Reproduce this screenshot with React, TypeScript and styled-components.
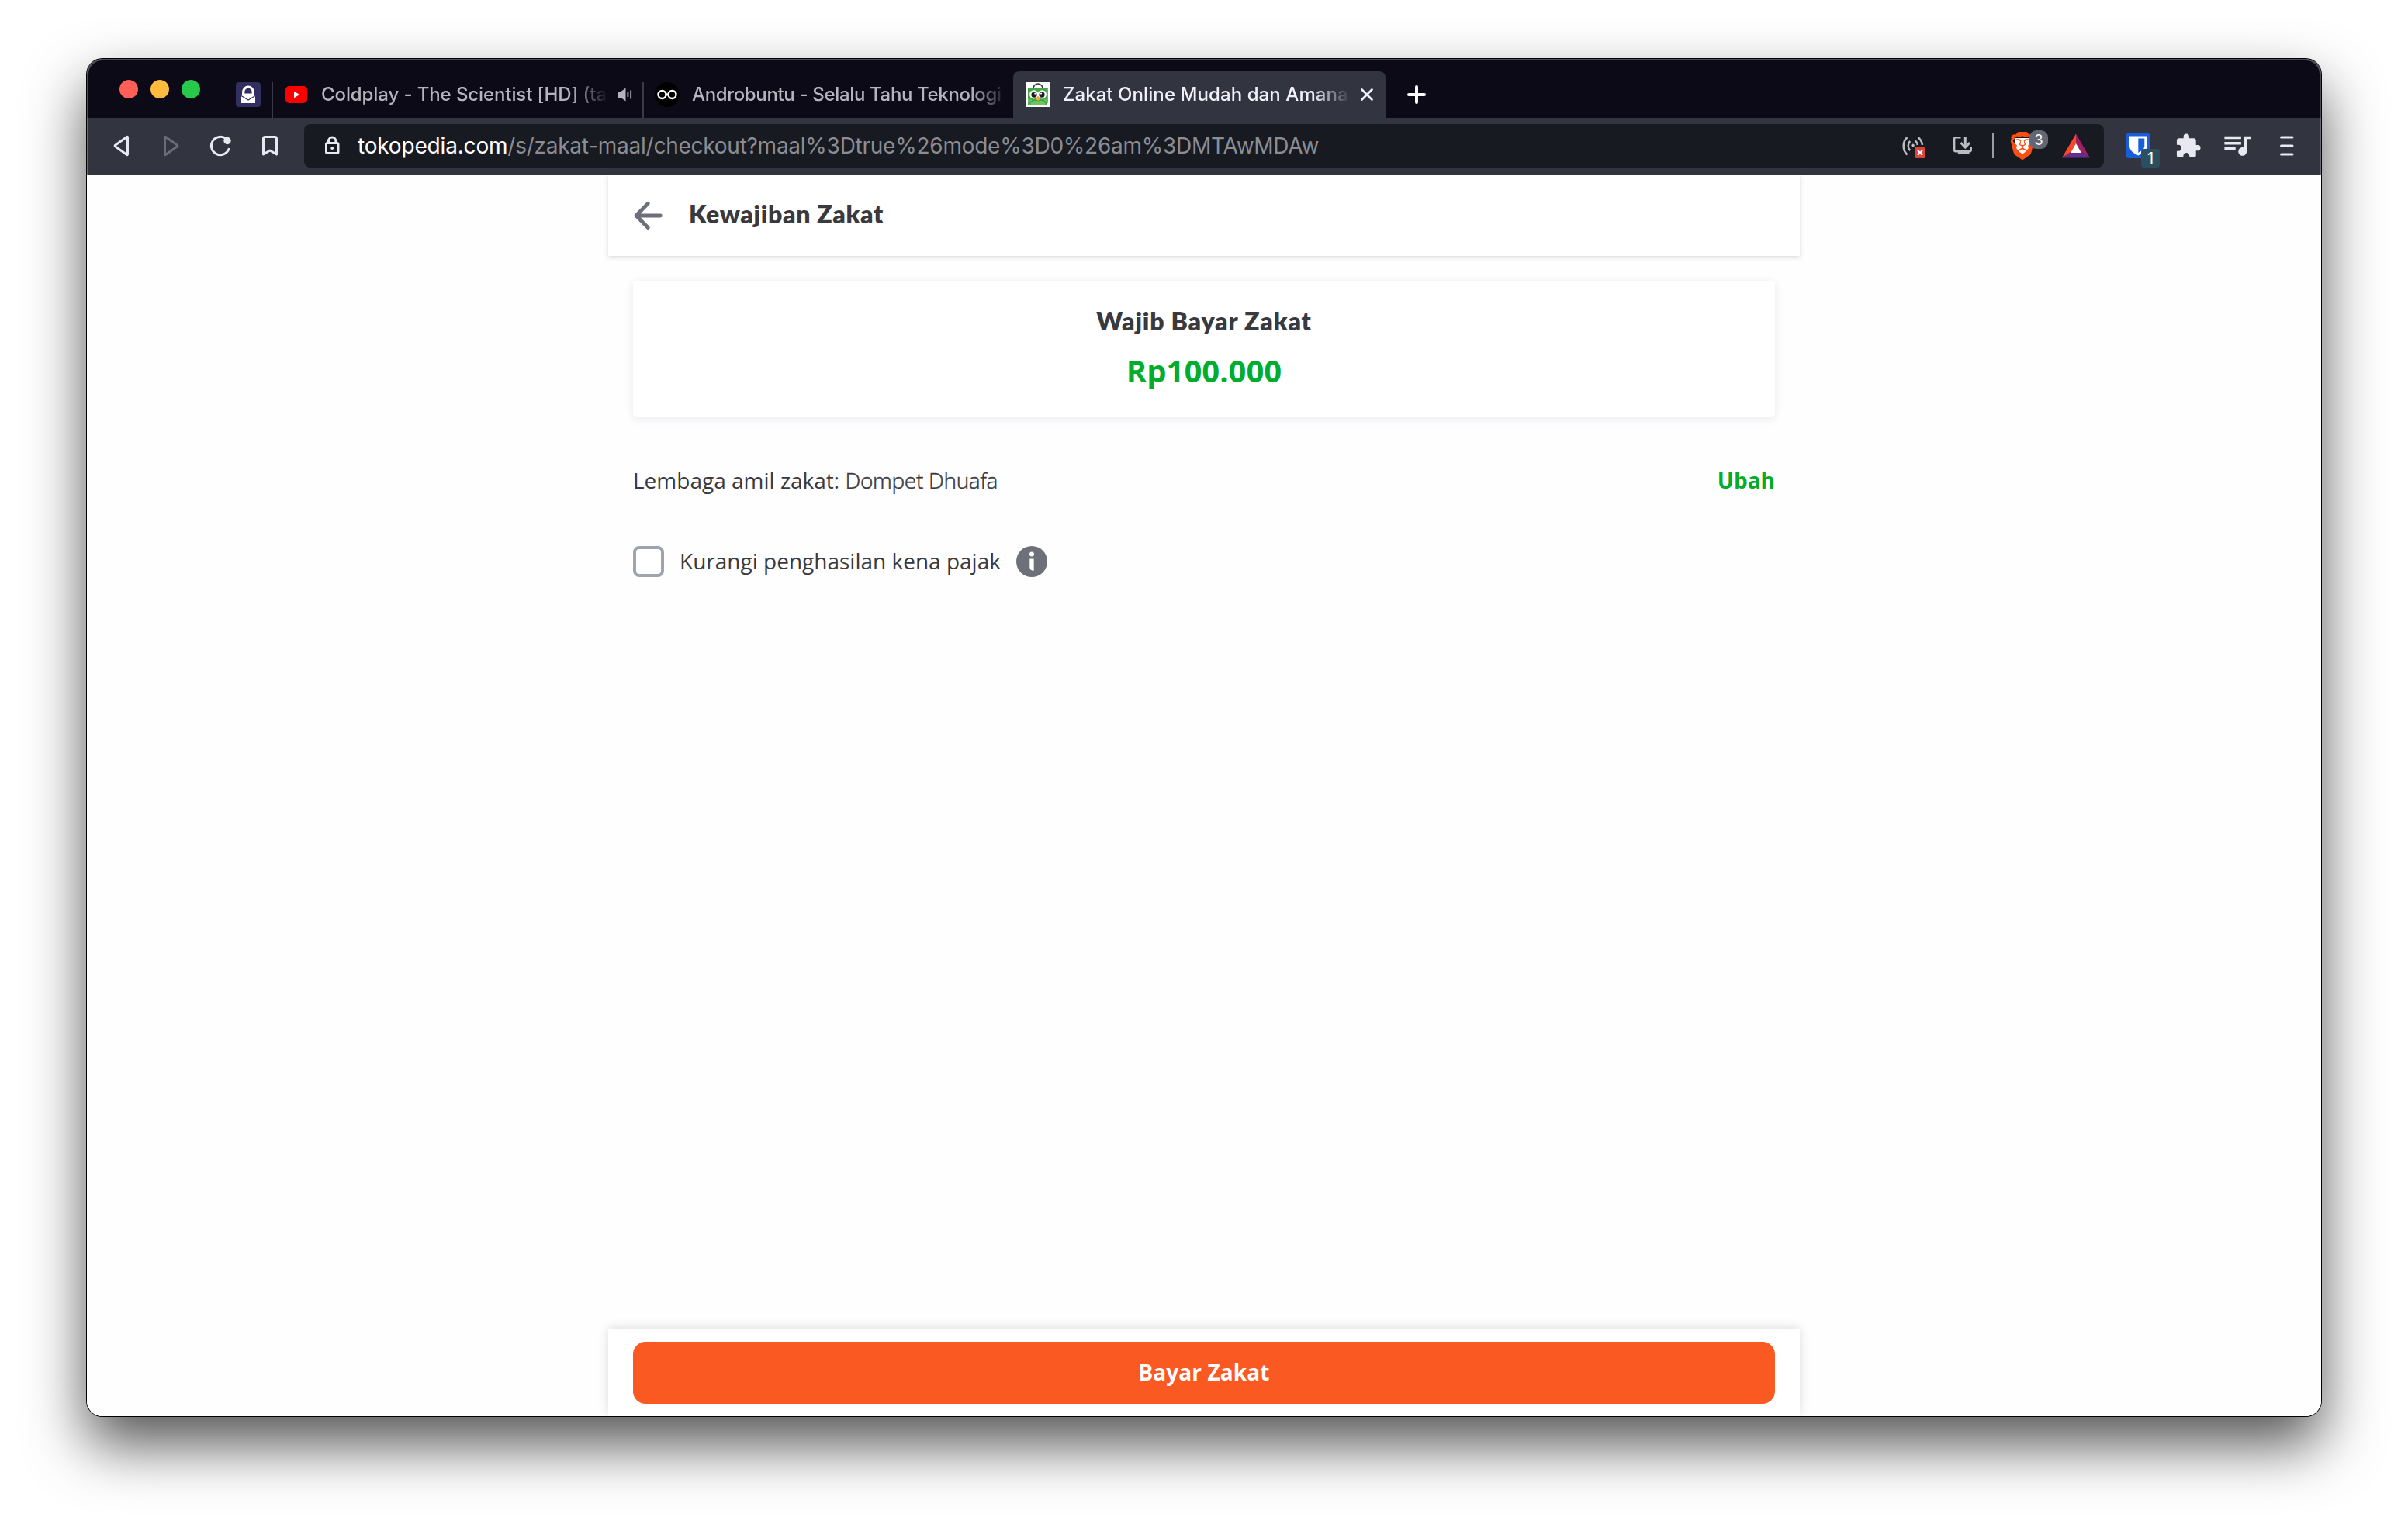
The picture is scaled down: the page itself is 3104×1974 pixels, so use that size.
import React from "react";

import styled, { createGlobalStyle, css } from "styled-components";
import { MdExtension, MdQueueMusic } from "react-icons/md";
import { SiBrave } from "react-icons/si";

const Color = {
    WHITE: "#ffffff",
    TAB_STRIP: "#0c0a17",
    TOOLBAR: "#323440",
    ADDRESS: "#171a21",
    ICON: "#e8e8f2",
    ICON_DISABLED: "#6b6c78",
    ICON_ADDRESS: "#bcbdc0",
    TAB_TEXT: "#b6b3bf",
    TAB_TEXT_ACTIVE: "#f1f0fa",
    URL_PATH: "#8b8d93",
    DARK: "#3a3a3e",
    GREY: "#6d7078",
    GREEN: "#03ac2b",
    ORANGE: "#fb5922",
}

const FontFamily = {
    UI: `Inter, "Liberation Sans", sans-serif`,
    BODY: `"Open Sans", "Noto Sans", sans-serif`,
    TITLE: `Lato, "Open Sans", sans-serif`,
}

const URL_HOST = "tokopedia.com"
const URL_PATH = "/s/zakat-maal/checkout?maal%3Dtrue%26mode%3D0%26am%3DMTAwMDAw"

export default function App() {
    return <Desktop>
        <GlobalStyle />
        <Window>
            <TabStrip />
            <Toolbar />
            <CheckoutPage />
        </Window>
    </Desktop>
}

function TabStrip() {
    return <StyledTabStrip>
        <TrafficLights>
            <TrafficLight color="#ff5f57" />
            <TrafficLight color="#febb3e" />
            <TrafficLight color="#28c84b" />
        </TrafficLights>
        <PinnedTab><ProtonMailIcon /></PinnedTab>
        <TabSeparator />
        <Tab>
            <YouTubeIcon />
            <TabTitle width={371} spacing={-0.1}>Coldplay - The Scientist [HD] (ta</TabTitle>
            <SpeakerIcon />
        </Tab>
        <TabSeparator />
        <Tab>
            <InfinityIcon />
            <TabTitle width={408} spacing={-0.347}>Androbuntu - Selalu Tahu Teknologi</TabTitle>
        </Tab>
        <Tab active>
            <TokopediaIcon />
            <TabTitle width={371} spacing={0.081}>Zakat Online Mudah dan Amana</TabTitle>
            <CloseIcon />
        </Tab>
        <NewTabButton>
            <svg width="24" height="24" viewBox="0 0 24 24">
                <path d="M12 2v20M2 12h20" stroke={Color.WHITE} strokeWidth="4" strokeLinecap="round" />
            </svg>
        </NewTabButton>
    </StyledTabStrip>
}

function Toolbar() {
    return <StyledToolbar>
        <NavigationButtons>
            <BackIcon />
            <ForwardIcon />
            <ReloadIcon />
            <BookmarkIcon />
        </NavigationButtons>
        <AddressBar>
            <LockIcon />
            <UrlText><b>{URL_HOST}</b>{URL_PATH}</UrlText>
            <AddressActions>
                <BadgeAnchor>
                    <CastIcon />
                    <BlockedBadge>
                        <svg width="8" height="8" viewBox="0 0 8 8">
                            <path d="M1 1l6 6M7 1l-6 6" stroke={Color.WHITE} strokeWidth="2" />
                        </svg>
                    </BlockedBadge>
                </BadgeAnchor>
                <DownloadIcon />
                <AddressDivider />
                <BadgeAnchor>
                    <BraveIcon />
                    <ShieldsBadge>3</ShieldsBadge>
                </BadgeAnchor>
                <BatIcon />
            </AddressActions>
        </AddressBar>
        <ExtensionButtons>
            <BadgeAnchor>
                <BitwardenIcon />
                <BitwardenBadge>1</BitwardenBadge>
            </BadgeAnchor>
            <MdExtension size={35} color={Color.ICON} />
            <PlaylistIcon size={43} color={Color.ICON} />
            <MenuIcon />
        </ExtensionButtons>
    </StyledToolbar>
}

function CheckoutPage() {
    return <Viewport>
        <PageColumn>
            <PageHeader>
                <ArrowLeftIcon />
                <PageTitle>Kewajiban Zakat</PageTitle>
            </PageHeader>
            <PageBody>
                <AmountCard>
                    <CardTitle>Wajib Bayar Zakat</CardTitle>
                    <Amount>Rp100.000</Amount>
                </AmountCard>
                <InstitutionRow>
                    <BodyText>Lembaga amil zakat: <LightText>Dompet Dhuafa</LightText></BodyText>
                    <ChangeLink>Ubah</ChangeLink>
                </InstitutionRow>
                <TaxRow>
                    <Checkbox />
                    <BodyText>Kurangi penghasilan kena pajak</BodyText>
                    <InfoIcon />
                </TaxRow>
            </PageBody>
            <PageFooter>
                <PayButton>Bayar Zakat</PayButton>
            </PageFooter>
        </PageColumn>
    </Viewport>
}

/* Tab icons */

const ProtonMailIcon = () => <svg width="32" height="32" viewBox="0 0 32 32">
    <rect width="32" height="32" rx="4" fill="#312f60" />
    <path d="M8 13a8 8.500 0 0 1 16 0v4h1v10H7V17h1z" fill={Color.WHITE} />
    <path d="M11.300 14.500v-1.800a4.700 5 0 0 1 9.400 0v1.800z" fill="#312f60" />
    <path d="M7 17.600l9 5.400 9-5.400" fill="none" stroke="#312f60" strokeWidth="1.200" />
</svg>

const YouTubeIcon = () => <svg width="32" height="32" viewBox="0 0 32 32">
    <rect x="2" y="5" width="28" height="22" rx="5" fill="#ff0000" />
    <path d="M13 11.800v8.400l7.200-4.200z" fill={Color.WHITE} />
</svg>

const SpeakerIcon = () => <svg width="20" height="20" viewBox="0 0 20 20" fill={Color.TAB_TEXT}>
    <path d="M0 6h4.500l6-4.500v17l-6-4.500H0z" />
    <rect x="12.500" y="7" width="1.800" height="6" />
    <rect x="16.300" y="4.500" width="1.800" height="11" />
</svg>

const InfinityIcon = () => <svg width="32" height="32" viewBox="0 0 32 32" fill="none">
    <circle cx="16" cy="16" r="16" fill="#000" />
    <circle cx="9.500" cy="16" r="5" stroke={Color.WHITE} strokeWidth="2.400" />
    <circle cx="22.500" cy="16" r="5" stroke={Color.WHITE} strokeWidth="2.400" />
    <path d="M13.800 14.500l4.400 3M13.800 17.500l4.400-3" stroke={Color.WHITE} strokeWidth="1.600" />
</svg>

const TokopediaIcon = () => <svg width="32" height="32" viewBox="0 0 32 32">
    <rect width="32" height="32" fill={Color.WHITE} />
    <path d="M10 8a6 6 0 0 1 12 0" fill="none" stroke="#2f3b33" strokeWidth="1.700" />
    <path d="M3 7h25.800v17.500a5.500 5.500 0 0 1-5.500 5.500H3z" fill="#43a648" />
    <path d="M3 21l6 1.500L3.500 29z" fill="#63be5b" />
    <path d="M28.800 21l-6 1.500 5.500 5z" fill="#63be5b" />
    <path d="M5 29.500c3-5 6-6.500 11-5 5-1.500 8 0 10 4l-3 1z" fill="#6cc662" />
    <circle cx="10.700" cy="15.800" r="5.600" fill={Color.WHITE} />
    <circle cx="21.300" cy="15.800" r="5.600" fill={Color.WHITE} />
    <circle cx="11" cy="16.200" r="3.600" fill="#1d1d1d" />
    <circle cx="21" cy="16.200" r="3.600" fill="#1d1d1d" />
    <circle cx="12.300" cy="14.600" r="1.100" fill={Color.WHITE} />
    <circle cx="20" cy="14.600" r="1.100" fill={Color.WHITE} />
    <path d="M16 18.500c2 1 3.200 2 2.800 3.200l-2.800 2.300-2.800-2.300c-.4-1.200.8-2.200 2.800-3.200z" fill="#f9a825" />
</svg>

const CloseIcon = () => <svg width="20" height="20" viewBox="0 0 20 20">
    <path d="M3.500 3.500l13 13M16.500 3.500l-13 13" stroke={Color.TAB_TEXT_ACTIVE} strokeWidth="2.800" strokeLinecap="round" />
</svg>

/* Toolbar icons */

const strokeProps = { fill: "none", stroke: Color.ICON, strokeWidth: 3, strokeLinejoin: "round", strokeLinecap: "round" } as const

const BackIcon = () => <svg width="32" height="32" viewBox="0 0 32 32">
    <path d="M23.500 5v22a.6.6 0 0 1-1 .5L7.500 16.800a1 1 0 0 1 0-1.600L22.500 4.500a.6.6 0 0 1 1 .5z" {...strokeProps} />
</svg>

const ForwardIcon = () => <svg width="32" height="32" viewBox="0 0 32 32">
    <path d="M7.500 5v22a.6.6 0 0 0 1 .5l15-10.700a1 1 0 0 0 0-1.600L8.500 4.500a.6.6 0 0 0-1 .5z" {...strokeProps} stroke={Color.ICON_DISABLED} />
</svg>

const ReloadIcon = () => <svg width="32" height="32" viewBox="0 0 32 32">
    <path d="M26 20.300A11.700 11.700 0 1 1 22.600 7" {...strokeProps} />
    <circle cx="24" cy="9.500" r="4.700" fill={Color.ICON} />
</svg>

const BookmarkIcon = () => <svg width="32" height="32" viewBox="0 0 32 32">
    <path d="M8.500 4.500h13a2 2 0 0 1 2 2V27L15 22l-8.500 5V6.500a2 2 0 0 1 2-2z" {...strokeProps} />
</svg>

const LockIcon = () => <svg width="32" height="32" viewBox="0 0 32 32" fill="none" stroke={Color.ICON} strokeWidth="3">
    <rect x="8.500" y="12.500" width="15.500" height="13" rx="1.500" />
    <path d="M11.500 12V9.800a4.700 4.700 0 0 1 9.400 0V12" />
    <circle cx="16.200" cy="19" r="2" fill={Color.ICON} stroke="none" />
</svg>

const CastIcon = () => <svg width="32" height="32" viewBox="0 0 32 32" fill="none" stroke={Color.ICON_ADDRESS} strokeWidth="2.500">
    <path d="M8.500 5a15.500 15.500 0 0 0 0 22.500" />
    <path d="M12.200 10a8.500 8.500 0 0 0 0 12" />
    <path d="M22.500 5a15.500 15.500 0 0 1 5.500 10" />
    <path d="M18.800 9.500a8.500 8.500 0 0 1 3 5.500" />
    <circle cx="15.600" cy="15.600" r="2.200" fill={Color.ICON_ADDRESS} stroke="none" />
</svg>

const DownloadIcon = () => <svg width="32" height="32" viewBox="0 0 32 32" fill="none" stroke={Color.ICON_ADDRESS} strokeWidth="2.400">
    <path d="M13.500 5.200H6.700a1.500 1.500 0 0 0-1.500 1.500v15a1.500 1.500 0 0 0 1.500 1.500h18.600a1.500 1.500 0 0 0 1.500-1.500V18" />
    <path d="M19.300 4v12" strokeWidth="3" />
    <path d="M13.500 12l5.800 6 5.800-6" strokeWidth="3" />
    <path d="M11.500 23h11.500v2.200H11.500zM9.800 25.800h14.700" />
</svg>

const BraveIcon = () => <svg width="30" height="36" viewBox="0 0 30 36">
    <path d="M5 8h20v13l-6 8h-8l-6-8z" fill={Color.WHITE} />
    <SiBrave x={-3} y={0} size={36} color="#fb4f14" />
</svg>

const BatIcon = () => <svg width="36" height="32" viewBox="0 0 36 32">
    <path d="M18 .500L0 31.500l11.500-7.500L18 13.500z" fill="#ff4724" />
    <path d="M18 .500l18 31L24.500 24 18 13.500z" fill="#9e1f63" />
    <path d="M0 31.500h36L24.500 24h-13z" fill="#662d91" />
    <path d="M18 13l7 12H11z" fill={Color.WHITE} />
</svg>

const BitwardenIcon = () => <svg width="32" height="32" viewBox="0 0 32 32">
    <rect width="32" height="32" rx="4" fill="#175ddc" />
    <path d="M5 3.500h22.500v12.500c0 6-5 9.500-11.200 12.500C10 25.500 5 22 5 16z" fill={Color.WHITE} />
    <path d="M16.300 6.500h8v9.500c0 4-3.500 6.500-8 9z" fill="#175ddc" />
</svg>

const MenuIcon = () => <svg width="32" height="32" viewBox="0 0 32 32">
    <path d="M8.500 5h14.500M8.500 16h14.500M8.500 27h14.500" {...strokeProps} />
</svg>

/* Page icons */

const ArrowLeftIcon = () => <svg width="40" height="40" viewBox="0 0 40 40">
    <path d="M19.300 4.300L4 20l15.300 15.500M4.500 20h30.800" fill="none" stroke={Color.GREY} strokeWidth="4.800" strokeLinecap="round" strokeLinejoin="round" />
</svg>

const InfoIcon = () => <svg width="40" height="40" viewBox="0 0 40 40">
    <circle cx="20" cy="20" r="20" fill={Color.GREY} />
    <circle cx="20" cy="10.500" r="3" fill={Color.WHITE} />
    <path d="M17.300 16.500h5.400v15.300c-3.300 0-5.400-1.300-5.400-4z" fill={Color.WHITE} />
</svg>

const GlobalStyle = createGlobalStyle`
    body {
        margin: 0;
        background: ${Color.WHITE};
    }

    svg {
        display: block;
        flex-shrink: 0;
    }
`

const Desktop = styled.div`
    box-sizing: border-box;
    width: 3104px;
    height: 1974px;
    padding: 76px 112px 148px;
    overflow: hidden;
`

const Window = styled.div`
    position: relative;
    display: flex;
    flex-direction: column;
    height: 1750px;
    border-radius: 20px;
    overflow: hidden;
    background: ${Color.WHITE};
    box-shadow: 0 0 0 1px #000, 0 36px 76px rgba(0, 0, 0, 0.68);

    &::after {
        content: "";
        position: absolute;
        inset: 0;
        border-radius: 20px;
        box-shadow: inset 0 0 0 2px rgba(255, 255, 255, 0.28);
    }
`

const StyledTabStrip = styled.div`
    display: flex;
    align-items: flex-end;
    height: 76px;
    background: ${Color.TAB_STRIP};
`

const TrafficLights = styled.div`
    display: flex;
    gap: 16px;
    align-self: flex-start;
    padding: 27px 30px 0 42px;
`

const TrafficLight = styled.span<{ color: string }>`
    width: 24px;
    height: 24px;
    border-radius: 50%;
    background: ${({ color }) => color};
`

const PinnedTab = styled.div`
    display: flex;
    align-items: center;
    height: 60px;
    padding: 0 14px 0 16px;
`

const TabSeparator = styled.span`
    width: 2px;
    height: 46px;
    background: #3b3946;
`

const Tab = styled.div.withConfig({ shouldForwardProp: (prop) => prop !== "active" })<{ active?: boolean }>`
    display: flex;
    align-items: center;
    gap: 15px;
    box-sizing: border-box;
    width: 476px;
    height: 60px;
    padding-left: 14px;
    color: ${Color.TAB_TEXT};
    ${({ active }) => active && css`
        width: 480px;
        padding-left: 16px;
        border-radius: 8px 8px 0 0;
        background: ${Color.TOOLBAR};
        color: ${Color.TAB_TEXT_ACTIVE};
    `}
`

const TabTitle = styled.span.withConfig({ shouldForwardProp: (prop) => prop !== "width" && prop !== "spacing" })<{ width: number; spacing: number }>`
    flex-shrink: 0;
    width: ${({ width }) => width}px;
    margin: 0 -4px 0 1px;
    white-space: nowrap;
    font-family: ${FontFamily.UI};
    font-size: 24px;
    font-weight: 500;
    line-height: 32px;
    letter-spacing: ${({ spacing }) => spacing}px;
    mask-image: linear-gradient(to right, #000 calc(100% - 48px), transparent);
`

const NewTabButton = styled.div`
    display: flex;
    align-items: center;
    height: 60px;
    padding-left: 28px;
`

const StyledToolbar = styled.div`
    display: flex;
    align-items: center;
    box-sizing: border-box;
    height: 74px;
    padding: 8px 0 10px 29px;
    background: ${Color.TOOLBAR};
`

const NavigationButtons = styled.div`
    display: flex;
    gap: 32px;
    margin-right: 27px;
`

const AddressBar = styled.div`
    display: flex;
    align-items: center;
    box-sizing: border-box;
    width: 2320px;
    height: 56px;
    padding: 0 18px 0 20px;
    border-radius: 8px;
    background: ${Color.ADDRESS};
`

const UrlText = styled.span`
    margin-left: 17px;
    font-family: ${FontFamily.UI};
    font-size: 28px;
    line-height: 36px;
    letter-spacing: -0.25px;
    color: ${Color.URL_PATH};

    b {
        font-weight: 400;
        letter-spacing: -0.18px;
        color: ${Color.WHITE};
    }
`

const AddressActions = styled.div`
    display: flex;
    align-items: center;
    margin-left: auto;

    > :nth-child(2) {
        margin: 0 22px 0 32px;
    }

    > :nth-child(4) {
        margin: 0 36px 0 22px;
    }
`

const AddressDivider = styled.span`
    width: 2px;
    height: 32px;
    background: #9b9da3;
`

const BadgeAnchor = styled.div`
    position: relative;
`

const BlockedBadge = styled.span`
    position: absolute;
    top: 18px;
    left: 18px;
    display: flex;
    align-items: center;
    justify-content: center;
    width: 14px;
    height: 14px;
    border-radius: 2px;
    background: #d9453d;
`

const CountBadge = styled.span`
    position: absolute;
    display: flex;
    align-items: center;
    justify-content: center;
    width: 24px;
    height: 24px;
    font-family: ${FontFamily.UI};
    color: ${Color.WHITE};
`

const ShieldsBadge = styled(CountBadge)`
    top: -2px;
    left: 24px;
    border-radius: 9px;
    background: #636775;
    font-size: 18px;
`

const BitwardenBadge = styled(CountBadge)`
    top: 20px;
    left: 20px;
    border-radius: 4px;
    background: #2b4f5f;
    font-size: 20px;
    line-height: 24px;
`

const ExtensionButtons = styled.div`
    display: flex;
    align-items: center;
    gap: 31px;
    margin-left: 28px;
`

const PlaylistIcon = styled(MdQueueMusic)`
    margin: 0 -4px 4px -7px;
`

const Viewport = styled.div`
    display: flex;
    flex: 1;
    justify-content: center;
    background: #fefefe;
`

const PageColumn = styled.div`
    display: flex;
    flex-direction: column;
    width: 1536px;
`

const PageHeader = styled.div`
    display: flex;
    align-items: center;
    height: 104px;
    padding-left: 32px;
    background: ${Color.WHITE};
    box-shadow: 0 2px 6px rgba(49, 53, 59, 0.18);
    clip-path: inset(0 -20px -20px);
`

const PageTitle = styled.h1`
    margin: 0 0 0 32px;
    padding-bottom: 5px;
    font-family: ${FontFamily.TITLE};
    font-size: 32px;
    font-weight: 800;
    line-height: 44px;
    letter-spacing: 0.66px;
    color: ${Color.DARK};
`

const PageBody = styled.div`
    flex: 1;
    padding: 32px 32px 0;
`

const AmountCard = styled.div`
    box-sizing: border-box;
    height: 176px;
    padding-top: 30px;
    border-radius: 4px;
    background: ${Color.WHITE};
    box-shadow: 0 2px 12px rgba(49, 53, 90, 0.1);
    text-align: center;
`

const CardTitle = styled.p`
    margin: 0;
    font-family: ${FontFamily.TITLE};
    font-size: 32px;
    font-weight: 800;
    line-height: 44px;
    letter-spacing: 0.82px;
    color: ${Color.DARK};
`

const Amount = styled.p`
    margin: 14px 0 0;
    font-family: ${FontFamily.BODY};
    font-size: 40px;
    font-weight: 700;
    line-height: 56px;
    color: ${Color.GREEN};
`

const InstitutionRow = styled.div`
    display: flex;
    justify-content: space-between;
    margin-top: 61px;
`

const BodyText = styled.span`
    font-family: ${FontFamily.BODY};
    font-size: 28px;
    line-height: 40px;
    color: ${Color.DARK};
`

const LightText = styled.span`
    font-weight: 300;
    letter-spacing: -0.3px;
    -webkit-text-stroke: 0.5px ${Color.DARK};
`

const ChangeLink = styled(BodyText)`
    font-weight: 700;
    color: ${Color.GREEN};
`

const TaxRow = styled.div`
    display: flex;
    align-items: center;
    gap: 20px;
    height: 40px;
    margin-top: 65px;

    ${BodyText} {
        padding-bottom: 3px;
    }
`

const Checkbox = styled.span`
    box-sizing: border-box;
    width: 40px;
    height: 40px;
    border: 4px solid #9fa3b0;
    border-radius: 8px;
    background: ${Color.WHITE};
`

const PageFooter = styled.div`
    box-sizing: border-box;
    height: 112px;
    padding: 16px 32px;
    background: ${Color.WHITE};
    box-shadow: 0 -2px 12px rgba(49, 53, 59, 0.18);
`

const PayButton = styled.button`
    display: block;
    width: 100%;
    height: 80px;
    padding: 0 0 3px;
    border: none;
    border-radius: 16px;
    background: ${Color.ORANGE};
    font-family: ${FontFamily.BODY};
    font-size: 28px;
    font-weight: 700;
    letter-spacing: 0.1px;
    color: ${Color.WHITE};
`
